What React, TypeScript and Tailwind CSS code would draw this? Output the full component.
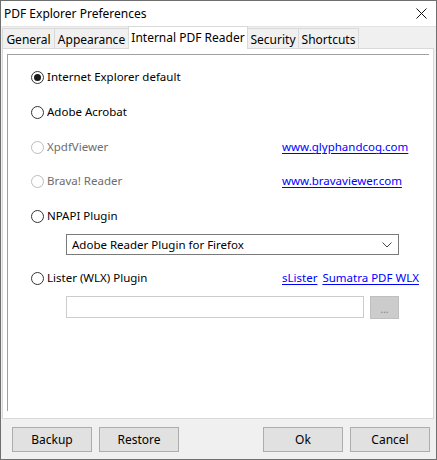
import React from "react";

const font = { fontFamily: '"Noto Sans", "Segoe UI", sans-serif' };

function Radio({ checked = false, disabled = false, label }: { checked?: boolean; disabled?: boolean; label: string }) {
  return (
    <div className="flex items-center h-[20px]">
      <span
        className={
          "w-[13px] h-[13px] rounded-full border bg-white flex items-center justify-center shrink-0 " +
          (disabled ? "border-[#bcbcbc]" : "border-[#333333]")
        }
      >
        {checked && <span className="w-[7px] h-[7px] rounded-full bg-[#1a1a1a]" />}
      </span>
      <span className={"ml-[3px] " + (disabled ? "text-[#6d6d6d]" : "text-black")}>{label}</span>
    </div>
  );
}

function Link({ children }: { children: React.ReactNode }) {
  return <span className="text-[#0000ff] underline underline-offset-[2px]">{children}</span>;
}

function Btn({ children }: { children: React.ReactNode }) {
  return (
    <div className="w-[80px] h-[25px] bg-[#e1e1e1] border border-[#adadad] flex items-center justify-center text-black">
      {children}
    </div>
  );
}

export default function App() {
  const tabs = [
    { label: "General", w: "w-[53px]" },
    { label: "Appearance", w: "w-[75px]" },
    { label: "Internal PDF Reader", w: "w-[120px]", sel: true },
    { label: "Security", w: "w-[52px]" },
    { label: "Shortcuts", w: "w-[61px]" },
  ];
  return (
    <div style={font} className="w-[437px] h-[460px] bg-[#f0f0f0] border border-[#6f6f6f] flex flex-col text-[11.5px] leading-none text-black overflow-hidden">
      {/* Title bar */}
      <div className="h-[25px] bg-white flex items-center justify-between shrink-0">
        <span className="ml-[3px] mt-[1px] text-[12px]">PDF Explorer Preferences</span>
        <svg width="11" height="11" viewBox="0 0 11 11" className="mr-[9px]">
          <path d="M0.5 0.5 L10.5 10.5 M10.5 0.5 L0.5 10.5" stroke="#111" strokeWidth="1" />
        </svg>
      </div>
      {/* Tabs */}
      <div className="flex items-end h-[22px] ml-[1px] shrink-0 border-t border-[#e3e3e3]">
        {tabs.map((t, i) =>
          t.sel ? (
            <div
              key={t.label}
              className={t.w + " -ml-px h-[23px] -mb-px relative z-10 bg-white border-l border-t border-r border-[#d9d9d9] flex items-center justify-center pb-[1px] text-[12px]"}
            >
              {t.label}
            </div>
          ) : (
            <div
              key={t.label}
              className={t.w + (i > 0 ? " -ml-px" : "") + " h-[20px] bg-[#f0f0f0] border-l border-t border-r border-[#d9d9d9] flex items-center justify-center pt-[2px] text-[12px]"}
            >
              {t.label}
            </div>
          )
        )}
      </div>
      {/* Panel */}
      <div className="ml-[1px] mr-[2px] h-[371px] bg-white border border-[#d9d9d9] shrink-0 relative">
        <div className="ml-[4px] mt-[5px] w-[422px] h-[357px] border-l border-t border-[#a0a0a0] pl-[23px] pt-[12px]">
          <Radio checked label="Internet Explorer default" />
          <div className="mt-[15px]">
            <Radio label="Adobe Acrobat" />
          </div>
          <div className="mt-[15px] flex items-center">
            <div className="w-[251px]">
              <Radio disabled label="XpdfViewer" />
            </div>
            <Link>www.glyphandcog.com</Link>
          </div>
          <div className="mt-[14px] flex items-center">
            <div className="w-[251px]">
              <Radio disabled label="Brava! Reader" />
            </div>
            <Link>www.bravaviewer.com</Link>
          </div>
          <div className="mt-[15px]">
            <Radio label="NPAPI Plugin" />
          </div>
          <div className="mt-[8px] ml-[35px] w-[333px] h-[21px] border border-[#7a7a7a] bg-white flex items-center justify-between pl-[5px] pr-[6px]">
            <span>Adobe Reader Plugin for Firefox</span>
            <svg width="10" height="6" viewBox="0 0 10 6">
              <path d="M0.5 0.5 L5 5 L9.5 0.5" stroke="#444" strokeWidth="1" fill="none" />
            </svg>
          </div>
          <div className="mt-[13px] flex items-center">
            <div className="w-[251px]">
              <Radio label="Lister (WLX) Plugin" />
            </div>
            <Link>sLister</Link>
            <span className="ml-[5px]">
              <Link>Sumatra PDF WLX</Link>
            </span>
          </div>
          <div className="mt-[8px] ml-[35px] flex items-start">
            <div className="w-[298px] h-[22px] border border-[#cccccc] bg-white" />
            <div className="ml-[6px] w-[29px] h-[23px] bg-[#cccccc] border border-[#bfbfbf] flex items-center justify-center text-[#838383] text-[10px] pt-[3px]">
              ...
            </div>
          </div>
        </div>
      </div>
      {/* Buttons */}
      <div className="mt-[8px] flex pl-[11px] pr-[6px] text-[12px]">
        <Btn>Backup</Btn>
        <div className="ml-[7px]">
          <Btn>Restore</Btn>
        </div>
        <div className="ml-auto">
          <Btn>Ok</Btn>
        </div>
        <div className="ml-[7px]">
          <Btn>Cancel</Btn>
        </div>
      </div>
    </div>
  );
}
